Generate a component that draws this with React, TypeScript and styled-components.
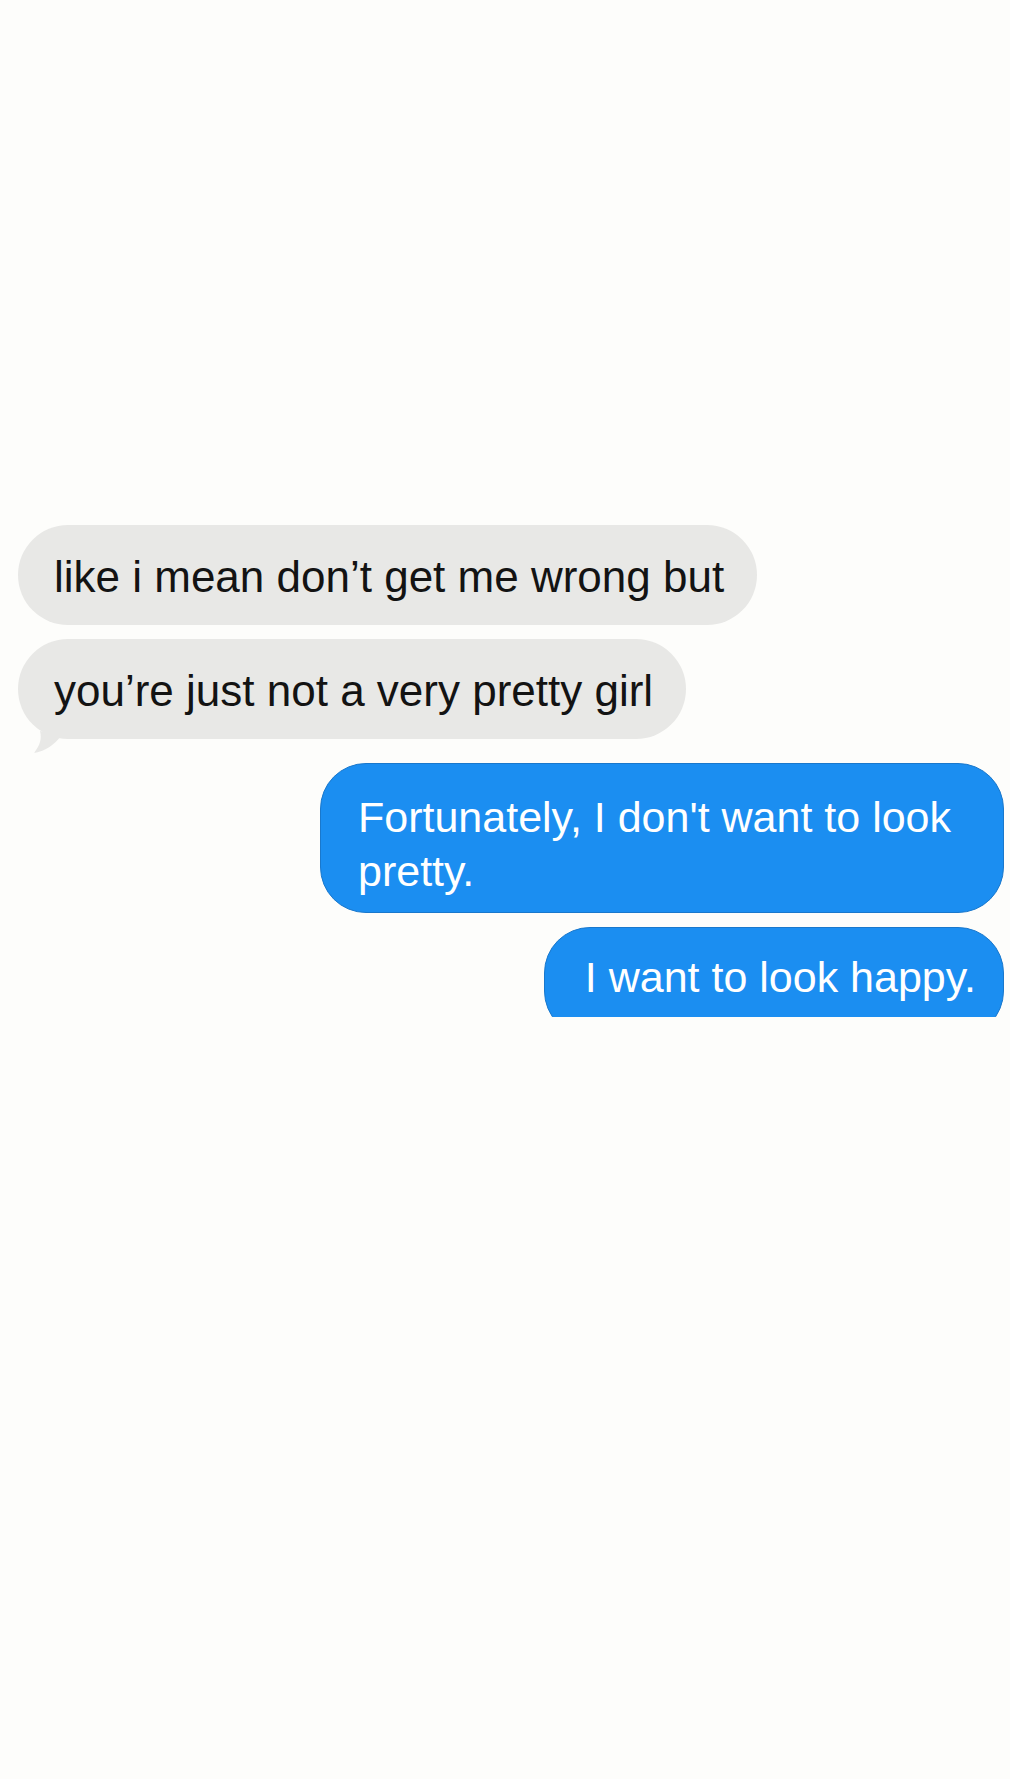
import styled, { createGlobalStyle } from 'styled-components';

type Message = {
  id: number;
  text: string;
  fromMe: boolean;
  tail?: boolean;
  cut?: boolean;
};

const messages: Message[] = [
  { id: 1, text: 'like i mean don\u2019t get me wrong but', fromMe: false },
  { id: 2, text: 'you\u2019re just not a very pretty girl', fromMe: false, tail: true },
  { id: 3, text: "Fortunately, I don't want to look pretty.", fromMe: true },
  { id: 4, text: 'I want to look happy.', fromMe: true, cut: true },
];

const GlobalStyle = createGlobalStyle`
  html, body {
    margin: 0;
    padding: 0;
    background: #fdfdfb;
  }
  body {
    font-family: 'Liberation Sans', Arial, sans-serif;
  }
`;

export default function App() {
  return (
    <>
      <GlobalStyle />
      <Thread>
        {messages.map((m, i) => {
          const next = messages[i + 1];
          const gap = next && next.fromMe !== m.fromMe ? 24 : 14;
          const bubble = (
            <Bubble $fromMe={m.fromMe} $cut={m.cut}>
              {m.text}
              {m.tail && (
                <Tail viewBox="0 0 40 24" aria-hidden>
                  <path d="M8 0 C10 8 8 14 2 22 C14 20 22 14 30 4 Z" fill="#e8e8e6" />
                </Tail>
              )}
            </Bubble>
          );
          return (
            <Row key={m.id} $fromMe={m.fromMe} $gap={next ? gap : 0}>
              {m.cut ? <Clip>{bubble}</Clip> : bubble}
            </Row>
          );
        })}
      </Thread>
    </>
  );
}

const Thread = styled.div`
  min-height: 1779px;
  box-sizing: border-box;
  padding: 525px 6px 0 18px;
  display: flex;
  flex-direction: column;
`;

const Row = styled.div<{ $fromMe: boolean; $gap: number }>`
  display: flex;
  justify-content: ${(p) => (p.$fromMe ? 'flex-end' : 'flex-start')};
  margin-bottom: ${(p) => p.$gap}px;
`;

const Clip = styled.div`
  height: 90px;
  overflow: hidden;
`;

const Bubble = styled.div<{ $fromMe: boolean; $cut?: boolean }>`
  position: relative;
  box-sizing: border-box;
  max-width: ${(p) => (p.$fromMe ? '684px' : '760px')};
  min-height: 100px;
  padding: ${(p) => (p.$fromMe ? '26px 31px 14px 37px' : '4px 33px 0 36px')};
  display: flex;
  align-items: center;
  border-radius: ${(p) => (p.$fromMe ? '46px' : '50px')};
  background: ${(p) => (p.$fromMe ? '#1b8ef1' : '#e8e8e6')};
  color: ${(p) => (p.$fromMe ? '#ffffff' : '#131313')};
  border: ${(p) => (p.$fromMe ? '1px solid #1a78cc' : 'none')};
  font-size: ${(p) => (p.$fromMe ? '43px' : '44px')};
  line-height: 54px;
  font-weight: 400;
  ${(p) => p.$cut && 'padding: 22px 27px 14px 40px; align-items: flex-start; height: 110px;'}
`;

const Tail = styled.svg`
  position: absolute;
  left: 14px;
  bottom: -16px;
  width: 40px;
  height: 24px;
`;
